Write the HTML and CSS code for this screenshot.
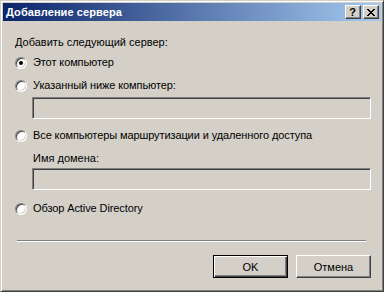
FILE: index.html
```html
<!DOCTYPE html>
<html lang="ru">
<head>
    <meta charset="UTF-8" />
    <title>Добавление сервера</title>
    <link rel="stylesheet" href="styles.css">
</head>
<body>
    <div class="window">
        <div class="titlebar">
            <span class="title">Добавление сервера</span>
            <div class="title-buttons">
                <span class="cap-btn">?</span>
                <span class="cap-btn close">
                    <svg width="8" height="7" viewBox="0 0 8 7"><path d="M0 0h2v1h1v1h2v-1h1v-1h2v1h-1v1h-1v1h-1v1h1v1h1v1h1v1h-2v-1h-1v-1h-2v1h-1v1h-2v-1h1v-1h1v-1h1v-1h-1v-1h-1v-1h-1z" fill="#000"/></svg>
                </span>
            </div>
        </div>
        <div class="content">
            <div class="caption">Добавить следующий сервер:</div>
            <label class="radio-row first"><span class="radio checked"></span>Этот компьютер</label>
            <label class="radio-row"><span class="radio"></span>Указанный ниже компьютер:</label>
            <div class="textbox"></div>
            <label class="radio-row r3"><span class="radio"></span>Все компьютеры маршрутизации и удаленного доступа</label>
            <div class="sub-label">Имя домена:</div>
            <div class="textbox tb2"></div>
            <label class="radio-row r4"><span class="radio"></span>Обзор Active Directory</label>
            <div class="separator"></div>
            <div class="buttons">
                <button class="btn default">OK</button>
                <button class="btn">Отмена</button>
            </div>
        </div>
    </div>
</body>
</html>
```

FILE: styles.css
```css
:root {
    --face: #d4d0c8;
    --shadow: #808080;
    --dark: #404040;
    --light: #ffffff;
}
html, body {
    margin: 0;
    padding: 0;
    background: var(--face);
}
body {
    font-family: Tahoma, 'Liberation Sans', Arial, sans-serif;
    font-size: 11px;
    color: #000;
}
.window {
    box-sizing: border-box;
    width: 384px;
    height: 292px;
    background: var(--face);
    border: 1px solid;
    border-color: var(--face) var(--dark) var(--dark) var(--face);
    box-shadow: inset 1px 1px var(--light), inset -1px -1px var(--shadow);
    padding: 2px;
}
.titlebar {
    height: 18px;
    background: linear-gradient(to right, #0a246a, #a6caf0);
    display: flex;
    align-items: center;
    justify-content: space-between;
    padding: 0 2px 0 3px;
}
.title {
    color: #fff;
    font-weight: bold;
    font-size: 11px;
    letter-spacing: 0.1px;
}
.title-buttons {
    display: flex;
    gap: 2px;
}
.cap-btn {
    box-sizing: border-box;
    width: 16px;
    height: 14px;
    background: var(--face);
    border: 1px solid;
    border-color: var(--light) var(--dark) var(--dark) var(--light);
    box-shadow: inset -1px -1px var(--shadow);
    display: flex;
    align-items: center;
    justify-content: center;
    font-weight: bold;
    font-size: 11px;
    line-height: 12px;
    padding-right: 1px;
}
.content {
    padding: 15px 10px 0 12px;
}
.caption, .sub-label, .radio-row {
    display: flex;
    align-items: center;
    height: 13px;
    line-height: 13px;
}
.radio-row {
    gap: 6px;
    letter-spacing: -0.1px;
}
.radio-row.first {
    margin-top: 7px;
}
.radio-row + .radio-row {
    margin-top: 10px;
}
.radio {
    box-sizing: border-box;
    width: 12px;
    height: 12px;
    border-radius: 50%;
    border: 1px solid;
    border-color: var(--shadow) var(--light) var(--light) var(--shadow);
    background: #fff;
    box-shadow: inset 1px 1px var(--dark), inset -1px -1px var(--face);
    position: relative;
}
.radio.checked::after {
    content: "";
    position: absolute;
    left: 3px;
    top: 3px;
    width: 4px;
    height: 4px;
    border-radius: 50%;
    background: #000;
}
.textbox {
    box-sizing: border-box;
    margin: 5px 0 0 17px;
    width: 339px;
    height: 22px;
    border: 1px solid;
    border-color: var(--shadow) var(--light) var(--light) var(--shadow);
    box-shadow: inset 1px 1px var(--dark), inset -1px -1px var(--face);
    background: var(--face);
}
.r3 {
    margin-top: 10px;
}
.sub-label {
    margin: 10px 0 0 18px;
}
.tb2 {
    margin-top: 3px;
}
.r4 {
    margin-top: 12px;
}
.separator {
    margin: 25px 5px 0 2px;
    border-top: 1px solid var(--shadow);
    border-bottom: 1px solid var(--light);
    height: 0;
}
.buttons {
    display: flex;
    justify-content: flex-end;
    gap: 8px;
    margin-top: 13px;
}
.btn {
    box-sizing: border-box;
    width: 75px;
    height: 23px;
    font-family: inherit;
    font-size: 11px;
    background: var(--face);
    border: 1px solid;
    border-color: var(--light) var(--dark) var(--dark) var(--light);
    box-shadow: inset -1px -1px var(--shadow);
    padding: 0;
    color: #000;
}
.btn.default {
    border: 1px solid #000;
    box-shadow: inset 1px 1px var(--light), inset -1px -1px var(--dark), inset -2px -2px var(--shadow);
}
```
